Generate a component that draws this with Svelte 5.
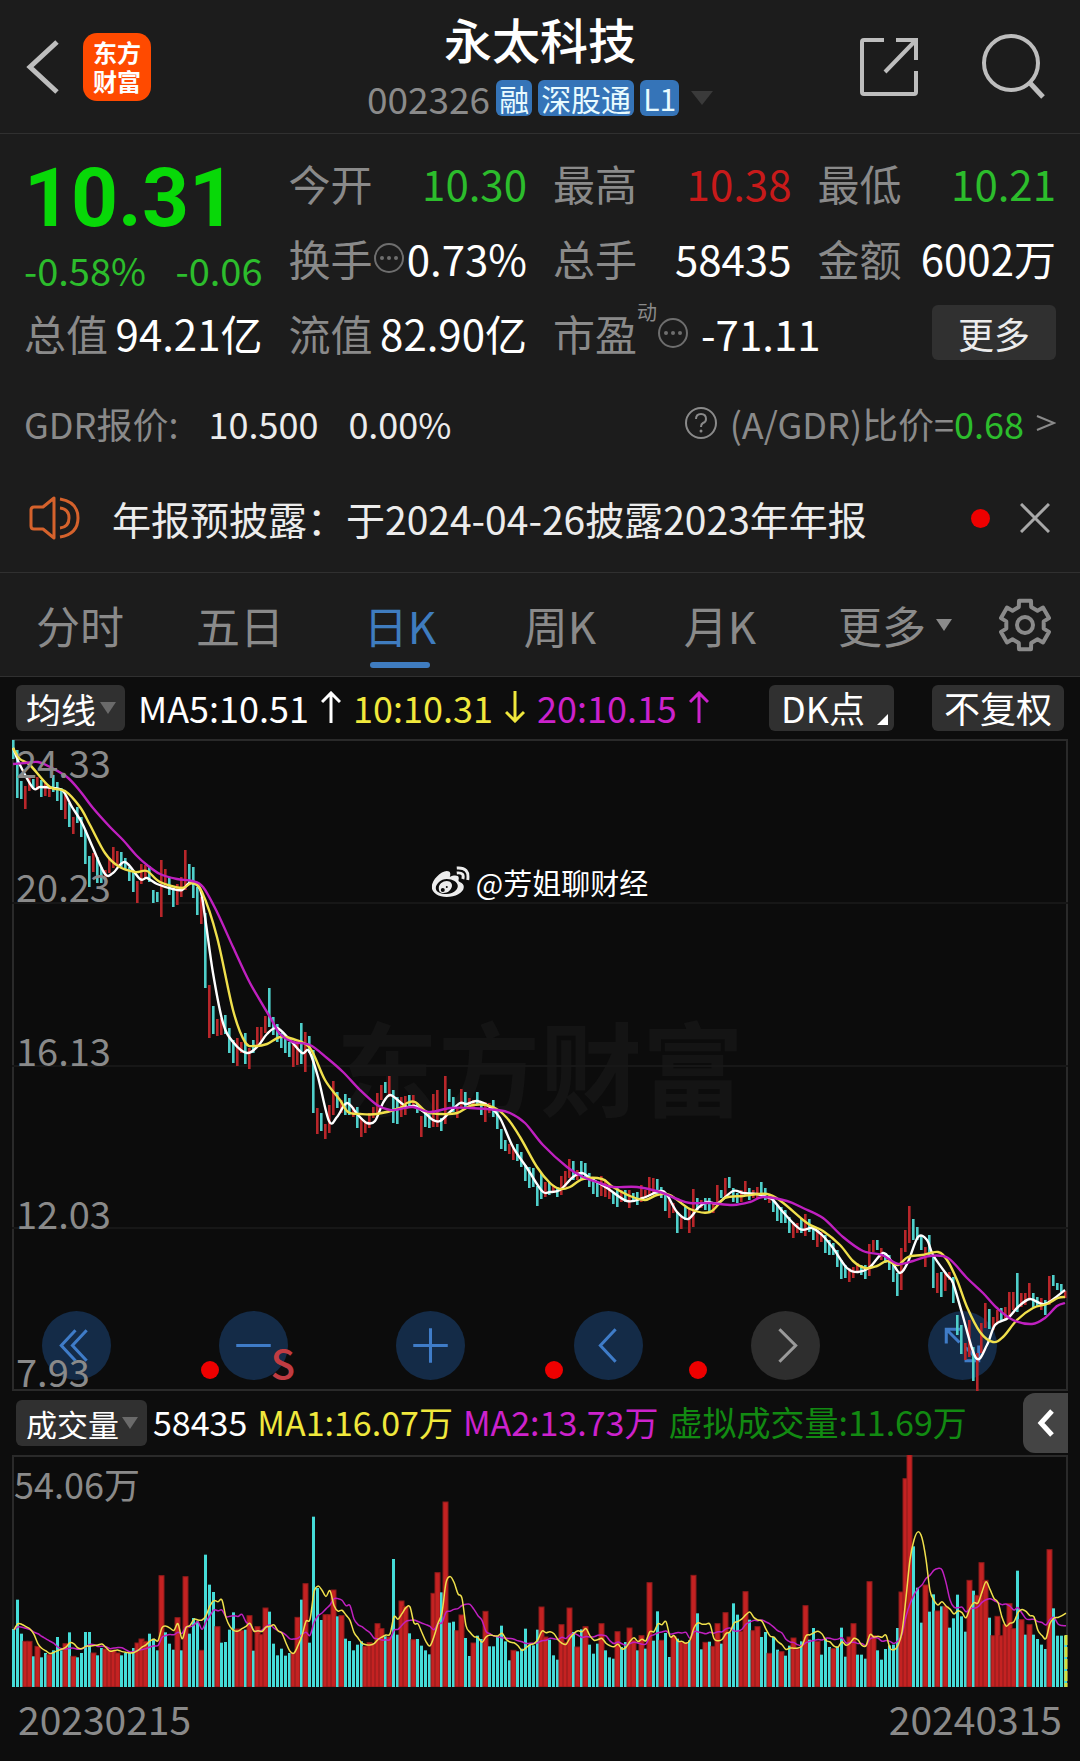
<script lang="ts">
  const MORE_LABEL = '更多';

  type Candle = { top: number; bottom: number; side: string };
  type Bar = { height: number; side: string };

  // high/low of every session in chart units, u = up day, d = down day
  const candleData = `
    1,20d 11,59d 42,60d 47,70u 36,52u 40,50d 38,51u 41,58d 44,57u 48,58u 36,53d 43,62d
    49,71d 56,80u 64,88d 78,95u 68,84d 78,98d 91,125d 117,148d 114,133u 118,144d 128,144d 131,139u
    119,134u 108,129u 112,126u 113,128d 119,131d 128,142d 133,153d 142,164u 125,145u 126,140u 127,143d 151,164d
    153,163d 121,178u 130,148u 139,156d 151,168d 145,166u 138,158u 111,151u 125,144d 128,159d 148,176d 158,185u
    174,249d 246,299u 267,295d 280,297u 279,296u 276,295d 289,314d 301,324d 299,327u 303,314u 294,325d 309,330u
    301,314d 288,306u 288,303u 277,294u 249,288d 278,296d 285,303d 294,309d 298,314d 303,318d 306,328u 301,326u
    284,325d 293,333u 297,314d 311,374d 369,395u 374,392d 385,400u 366,394u 342,376u 353,369d 361,374u 355,376d
    359,376d 368,378u 368,389d 379,398u 383,394u 374,389u 368,379u 354,374u 346,361u 343,354d 337,358u 351,384d
    358,385d 358,378u 357,376u 356,368d 356,369u 364,374d 377,398u 374,388d 374,389d 355,388u 351,388u 379,392d
    337,385u 350,363d 358,373d 368,379u 350,368u 353,368d 359,368u 361,369u 353,366d 363,376d 363,383u 364,374u
    361,378d 371,390d 390,410d 401,412d 405,415u 409,421u 405,422d 413,428d 426,442d 428,449d 429,448d 447,467d
    434,460d 443,458u 443,456d 446,454u 448,458d 437,456u 432,448u 420,439u 422,441d 431,441u 422,441d 424,441d
    434,448d 439,455d 444,458d 437,457u 441,458u 446,460u 453,465d 449,468d 451,463u 451,463d 451,469u 454,463d
    453,466d 446,463u 451,459u 438,456u 439,454u 440,456d 448,459d 455,472d 461,479u 464,474u 473,494d 478,490u
    468,481d 469,494u 450,488u 459,471d 461,469u 459,471d 459,473d 463,474u 446,463u 451,459d 439,458u 438,449d
    449,463d 454,464d 451,463u 442,456u 449,461d 451,459u 448,459u 443,456d 449,461d 456,464u 459,473d 466,482d
    468,484d 471,484d 478,494d 483,499u 484,494u 479,494d 475,497u 480,493d 488,501d 491,508u 493,503u 496,514d
    501,516d 504,516d 511,528d 521,540d 526,539d 529,543u 528,539u 524,534u 526,536d 526,540d 505,537u 501,513u
    501,511d 509,521u 514,524d 516,531d 524,543d 534,557d 509,551u 491,513u 467,504u 480,501d 488,501d 496,511d
    508,528u 496,518d 516,549d 534,554u 533,558d 533,552u 533,541u 538,564d 576,596d 586,615d 604,621u 581,618u
    608,642d 614,652u 584,614u 564,589u 570,590d 578,591u 571,584u 569,581d 568,581u 553,578u 553,571u 534,573d
    554,568u 554,566u 544,561u 554,568d 558,568d 559,571u 561,576d 537,566u 536,547d 544,551d 545,553d 552,559u`;

  const volumeData = `
    d174 d262 d160 u137 u137 d92 u122 d89 d102 u97 d110 d150 d110 u130 d164 u92 d89 d102 d165 d165 u102 d95
    d117 u114 u110 u110 u102 d95 d102 d102 d117 u132 u144 u137 d160 d145 d110 u334 d164 d130 d112 u208 d110 u331
    d160 d207 d197 u110 d397 d307 d285 u181 d133 d135 d172 d224 u174 u169 d172 u214 d109 u181 u157 u237 d226 d130
    d95 d115 d94 d102 u102 u209 d262 u310 d133 d511 d297 d201 u217 u217 u291 d212 u214 d145 d138 d110 d127 d137
    u122 u133 u130 u190 u175 d152 u150 d384 d157 u258 u242 d161 u142 d144 d124 d110 d98 u281 u343 d284 u555 d193
    d196 u169 u216 d147 d93 u132 d154 d144 u227 d122 d122 d152 d184 d137 d80 u110 d107 d115 d175 d127 d125 d172
    u240 u150 d142 d95 d82 u187 u134 u237 d165 u120 d173 u181 d127 d100 d130 u190 d110 d89 d85 u166 d120 d135
    u177 u140 d110 u154 d115 u313 d139 d227 u140 d162 d90 u152 d145 u135 u133 d140 u335 d221 d113 u134 d136 u122
    u190 d130 u223 d164 d251 d217 u167 u286 d202 u169 u181 d150 d165 u101 d150 d112 u106 d94 d124 u147 u114 d137
    u244 d142 d177 u137 d97 d145 d120 u115 d122 d178 d91 u150 u190 d97 d97 d85 u316 u154 d110 d82 d114 d125
    d127 d177 u285 u625 u697 d422 d298 d193 u306 d226 d278 u228 d242 u242 d178 d206 d277 d212 d166 u320 d289 u275
    u373 u320 d208 u154 u212 u154 u187 u250 u175 d349 u202 d157 u187 d157 d144 d127 d114 u412 d236 d154 d154 d154`;

  const ma5 = `1,9 8,26 21,49 28,48 41,49 51,52 60,68 70,84 81,109 93,135 101,134 113,123 128,140 135,139 145,145
    161,150 170,151 178,144 188,150 193,178 201,234 211,284 221,303 235,314 246,307 255,295 265,289 278,301 290,314
    297,312 306,338 317,382 325,378 335,364 346,376 355,384 363,382 371,364 378,356 388,363 395,368 403,367 413,374
    421,381 428,382 438,373 448,364 455,365 465,362 478,368 488,379 501,408 515,429 530,452 538,453 548,451 561,438
    570,434 578,439 595,449 615,462 631,459 648,452 655,456 665,473 676,480 686,469 695,463 706,464 721,452 731,454
    745,455 754,458 761,461 771,473 788,490 800,489 810,496 821,509 835,529 846,533 858,528 871,514 880,523 888,534
    896,523 906,498 915,501 921,516 935,536 941,544 950,574 964,619 975,606 983,586 996,579 1006,568 1018,560
    1033,565 1053,551`;
  const ma10 = `1,9 8,20 18,26 38,48 53,52 68,68 78,86 93,114 106,127 123,133 135,132 148,143 170,149 180,144 190,153
    205,198 221,271 233,303 243,307 255,305 268,298 281,300 298,309 313,341 328,361 336,373 348,375 365,375 388,369
    395,364 403,363 415,373 428,375 445,374 461,366 481,368 495,379 508,398 525,428 538,444 548,450 558,448 571,440
    590,440 601,448 618,457 633,461 645,456 658,456 678,470 698,473 713,459 731,457 755,455 770,463 795,484 811,492
    828,506 841,522 853,529 865,527 875,522 886,526 896,518 910,516 926,513 935,521 945,541 955,568 968,593 981,603
    991,598 1005,581 1021,569 1035,565 1046,559 1053,558`;
  const ma20 = `1,25 13,24 26,23 38,28 55,38 68,52 81,69 98,88 111,101 125,117 135,126 148,135 165,140 180,142
    191,148 205,173 221,208 238,244 258,278 268,295 281,303 298,306 315,319 331,333 348,351 365,366 378,371 388,370
    401,368 418,373 438,369 458,369 485,371 498,374 513,384 531,406 555,428 571,438 588,444 601,448 625,448 648,453
    665,460 678,464 698,464 721,466 738,463 751,458 775,462 791,469 811,479 831,498 851,512 870,516 886,525 901,522
    918,517 936,519 955,539 971,554 985,569 1001,581 1020,585 1033,579 1045,567 1053,564`;

  const candles: Candle[] = candleData.trim().split(/\s+/).map((c) => {
    const [top, bottom] = c.slice(0, -1).split(',').map(Number);
    return { top, bottom, side: c.endsWith('u') ? 'up' : 'down' };
  });

  const volumes: Bar[] = volumeData.trim().split(/\s+/).map((v) => ({
    height: Number(v.slice(1)) / 3,
    side: v[0] === 'u' ? 'up' : 'down',
  }));

  function parsePoints(text: string): number[][] {
    return text.trim().split(/\s+/).map((p) => p.split(',').map(Number));
  }

  function smooth(points: number[][]): string {
    let d = `M${points[0]}`;
    for (let i = 0; i < points.length - 1; i++) {
      const p0 = points[i - 1] ?? points[i];
      const p1 = points[i];
      const p2 = points[i + 1];
      const p3 = points[i + 2] ?? p2;
      d += `C${p1[0] + (p2[0] - p0[0]) / 6},${p1[1] + (p2[1] - p0[1]) / 6}`;
      d += ` ${p2[0] - (p3[0] - p1[0]) / 6},${p2[1] - (p3[1] - p1[1]) / 6} ${p2}`;
    }
    return d;
  }

  function volumeAverage(days: number): string {
    return smooth(volumes.map((_, i) => {
      let sum = 0;
      for (let k = i - days + 1; k <= i; k++) sum += k < 0 ? 57 : volumes[k].height;
      return [i * 4 + 2, 232 - sum / days];
    }));
  }

  function gearPath(): string {
    const pts: string[] = [];
    for (let t = 0; t < 6; t++) {
      for (const [offset, r] of [[-19, 19], [-14, 25], [14, 25], [19, 19]]) {
        const a = ((t * 60 - 90 + offset) * Math.PI) / 180;
        pts.push(`${(27 + r * Math.cos(a)).toFixed(1)},${(27 + r * Math.sin(a)).toFixed(1)}`);
      }
    }
    return `M${pts.join('L')}Z`;
  }

  const periods = ['分时', '五日', '日K', '周K', '月K'];
  let active = $state('日K');

  const gridLines = [164, 327, 489];
  const priceLabels = [
    { text: '24.33', y: 23 },
    { text: '20.23', y: 147 },
    { text: '16.13', y: 311 },
    { text: '12.03', y: 474 },
    { text: '7.93', y: 632 },
  ];
  const markers = [198, 542, 686];

  const tools = [
    { label: '最早', d: 'M33 19 19 34l14 15M44 19 30 34l14 15' },
    { label: '缩小', d: 'M17 34h34' },
    { label: '放大', d: 'M17 34h34M34 17v34' },
    { label: '向左', d: 'M41 18 26 34l15 16' },
    { label: '向右', d: 'M28 18 44 34 28 50', muted: true },
    { label: '全屏', d: 'M18 32V18h14M18 18l13 13M50 34v15H36M50 49 37 36' },
  ];
</script>

{#snippet arrow(down: boolean)}
  <svg class="arrow" viewBox="0 0 20 32" aria-hidden="true">
    <path d={down ? 'M10 0v30M1 21l9 9 9-9' : 'M10 32V2M1 11l9-9 9 9'} />
  </svg>
{/snippet}

{#snippet info()}
  <svg class="info" viewBox="0 0 32 32" aria-hidden="true">
    <circle cx="16" cy="16" r="14" fill="none" stroke="currentColor" stroke-width="2" />
    <circle cx="9" cy="16" r="2" fill="currentColor" />
    <circle cx="16" cy="16" r="2" fill="currentColor" />
    <circle cx="23" cy="16" r="2" fill="currentColor" />
  </svg>
{/snippet}

<div class="app">
  <div class="top">
    <header>
      <div class="side">
        <button class="icon-btn" aria-label="返回">
          <svg width="34" height="56" viewBox="0 0 34 56"><path d="M31 3 4 28l27 25" stroke="#bdbdbd" stroke-width="5" /></svg>
        </button>
        <div class="logo"><span>东方</span><span>财富</span></div>
      </div>
      <div class="title">
        <h1>永太科技</h1>
        <div class="code">
          <span>002326</span>
          <span class="badge">融</span>
          <span class="badge">深股通</span>
          <span class="badge">L1</span>
          <span class="caret dark"></span>
        </div>
      </div>
      <div class="side end">
        <button class="icon-btn" aria-label="分享">
          <svg width="60" height="60" viewBox="0 0 60 60">
            <path d="M25 3H5q-2 0-2 2v50q0 2 2 2h50q2 0 2-2V34M37 3h20v20M57 3 26 35" stroke="#bdbdbd" stroke-width="4" />
          </svg>
        </button>
        <button class="icon-btn" aria-label="搜索">
          <svg width="66" height="68" viewBox="0 0 66 68">
            <circle cx="30" cy="30" r="27" fill="none" stroke="#bdbdbd" stroke-width="4" />
            <path d="M49 50 62 64" stroke="#bdbdbd" stroke-width="5" />
          </svg>
        </button>
      </div>
    </header>

    <section class="quote">
      <div class="last">
        <strong>10.31</strong>
        <div class="change"><span>-0.58%</span><span>-0.06</span></div>
      </div>
      <div class="cell"><span class="name">今开</span><span class="green">10.30</span></div>
      <div class="cell"><span class="name">最高</span><span class="red">10.38</span></div>
      <div class="cell"><span class="name">最低</span><span class="green">10.21</span></div>
      <div class="cell"><span class="name">换手{@render info()}</span><span>0.73%</span></div>
      <div class="cell"><span class="name">总手</span><span>58435</span></div>
      <div class="cell"><span class="name">金额</span><span>6002万</span></div>
      <div class="cell"><span class="name">总值</span><span>94.21亿</span></div>
      <div class="cell"><span class="name">流值</span><span>82.90亿</span></div>
      <div class="cell wide">
        <span class="pe"><span class="name">市盈<sup>动</sup>{@render info()}</span><span>-71.11</span></span>
        <button class="more">{MORE_LABEL}</button>
      </div>
    </section>

    <section class="gdr">
      <span class="name">GDR报价:</span>
      <span class="gdr-price">10.500</span>
      <span>0.00%</span>
      <a class="ratio" href="#gdr">
        <svg width="34" height="34" viewBox="0 0 34 34" aria-hidden="true">
          <circle cx="17" cy="17" r="15" fill="none" stroke="#8a8a8a" stroke-width="2" />
          <path d="M12 13q0-5 5-5t5 5q0 3-3 4-2 1-2 4" stroke="#8a8a8a" stroke-width="2" />
          <circle cx="17" cy="25" r="1.5" fill="#8a8a8a" />
        </svg>
        <span>(A/GDR)比价=<em>0.68</em></span>
        <svg width="20" height="18" viewBox="0 0 20 18" aria-hidden="true"><path d="M1 2l17 7-17 7" stroke="#8a8a8a" stroke-width="2" /></svg>
      </a>
    </section>

    <section class="notice">
      <svg width="52" height="46" viewBox="0 0 52 46" aria-hidden="true">
        <path d="M26 3v40L15 34H6q-3 0-3-3V15q0-3 3-3h9ZM32 4q18 3 18 19T32 42M32 13q9 1 9 10t-9 10" stroke="#d5622c" stroke-width="3" stroke-linejoin="round" />
      </svg>
      <span class="notice-text">年报预披露：于2024-04-26披露2023年年报</span>
      <span class="dot"></span>
      <button class="icon-btn" aria-label="关闭">
        <svg width="30" height="30" viewBox="0 0 30 30"><path d="M1 1l28 28M29 1 1 29" stroke="#a8a8a8" stroke-width="3" /></svg>
      </button>
    </section>

    <nav class="tabs">
      {#each periods as period}
        <button class="tab" class:active={active === period} onclick={() => (active = period)}>{period}</button>
      {/each}
      <button class="tab">{MORE_LABEL}<span class="caret small"></span></button>
      <button class="icon-btn" aria-label="设置">
        <svg width="54" height="54" viewBox="0 0 54 54">
          <path d={gearPath()} stroke="#8a8a8a" stroke-width="4" stroke-linejoin="round" />
          <circle cx="27" cy="27" r="8" fill="none" stroke="#8a8a8a" stroke-width="4" />
        </svg>
      </button>
    </nav>
  </div>

  <div class="bar">
    <label class="pick">
      <select aria-label="主图指标"><option>均线</option></select>
      <span class="caret grey"></span>
    </label>
    <div class="legend">
      <span>MA5:10.51{@render arrow(false)}</span>
      <span class="yellow">10:10.31{@render arrow(true)}</span>
      <span class="magenta">20:10.15{@render arrow(false)}</span>
    </div>
    <button class="chip dk">DK点</button>
    <button class="chip">不复权</button>
  </div>

  <div class="chart">
    <div class="watermark" aria-hidden="true">东方财富</div>
    {#each priceLabels as label}
      <span class="price-label" style="top: {(label.y / 652) * 100}%">{label.text}</span>
    {/each}
    <div class="tools">
      {#each tools as tool}
        <button class="tool" class:muted={tool.muted} aria-label={tool.label}>
          <svg viewBox="0 0 68 68"><path d={tool.d} /></svg>
        </button>
      {/each}
    </div>
    <svg class="plot" viewBox="0 0 1056 652">
      <path class="frame" d="M0 1H1056M0 651H1056M1 0V652M1055 0V652" />
      {#each gridLines as y}
        <line class="grid" x1="0" x2="1056" y1={y} y2={y} />
      {/each}
      {#each candles as c, i}
        <rect class={c.side} x={i * 4} y={c.top} width="2.6" height={c.bottom - c.top} />
      {/each}
      <path class="line" stroke="#ffffff" d={smooth(parsePoints(ma5))} />
      <path class="line" stroke="#f0e04c" d={smooth(parsePoints(ma10))} />
      <path class="line" stroke="#c020c0" d={smooth(parsePoints(ma20))} />
      {#each markers as x}
        <circle cx={x} cy="631" r="9" fill="#ee0000" />
      {/each}
      <text class="sell" x="271" y="640">S</text>
    </svg>
    <div class="credit">
      <svg width="38" height="32" viewBox="0 0 38 32" aria-hidden="true">
        <path fill-rule="evenodd" d="M0 21C0 14 9 5 15 5c4 0 4 3 3 6 4-2 9-2 9 1 0 2-1 3 1 4 3 1 4 3 4 5 0 6-9 10-17 10C7 31 0 27 0 21ZM4 22c0 4 5 6 11 6s11-4 11-8-5-7-11-7-11 5-11 9Z" />
        <path fill-rule="evenodd" d="M7 22c0-4 4-7 8-7s6 3 5 6-4 6-8 6-5-2-5-5Zm2 2a2 2 0 1 0 4 0 2 2 0 1 0-4 0Zm5-3a1 1 0 1 0 2 0 1 1 0 1 0-2 0Z" />
        <path d="M25 2q13-1 11 12M25 7q8-1 6 6" stroke="#ececec" stroke-width="3" />
      </svg>
      <span>@芳姐聊财经</span>
    </div>
  </div>

  <div class="bar volume-bar">
    <label class="pick">
      <select aria-label="副图指标"><option>成交量</option></select>
      <span class="caret grey"></span>
    </label>
    <div class="legend">
      <span>58435</span>
      <span class="yellow">MA1:16.07万</span>
      <span class="magenta">MA2:13.73万</span>
      <span class="virtual">虚拟成交量:11.69万</span>
    </div>
    <button class="drawer" aria-label="展开">
      <svg width="18" height="30" viewBox="0 0 18 30"><path d="M15 3 4 15l11 12" stroke="#fff" stroke-width="5" /></svg>
    </button>
  </div>

  <div class="chart">
    <span class="price-label max-volume">54.06万</span>
    <svg class="plot" viewBox="0 0 1056 232">
      <path class="frame" d="M0 1H1056M1 0V232M1055 0V232" />
      {#each volumes as v, i}
        {#if v.side === 'up'}
          <rect class="vol-up" x={i * 4 - 1} y={232 - v.height} width="5" height={v.height} />
        {:else}
          <rect class="vol-down" x={i * 4} y={232 - v.height} width="3" height={v.height} />
        {/if}
      {/each}
      <path class="virtual-bar" d="M1054 180V232" />
      <path class="line thin" stroke="#c020c0" d={volumeAverage(10)} />
      <path class="line thin" stroke="#f0e04c" d={volumeAverage(5)} />
    </svg>
  </div>
  <div class="dates"><span>20230215</span><span>20240315</span></div>
</div>

<style>
  :global(body) {
    margin: 0;
    background: #0d0d0d;
  }
  .app {
    background: #0d0d0d;
    color: #fff;
    font-family: 'Noto Sans CJK SC', 'Noto Sans', sans-serif;
    line-height: 1;
    white-space: nowrap;
  }
  button, select {
    font: inherit;
    color: inherit;
    border: 0;
    padding: 0;
    background: none;
    cursor: pointer;
  }
  svg {
    display: block;
    flex-shrink: 0;
  }
  svg path { fill: none; }
  .credit svg path[fill-rule] { fill: #ececec; }
  .icon-btn {
    display: flex;
    align-items: center;
    justify-content: center;
  }
  .top { background: #1c1c1c; }

  header {
    display: grid;
    grid-template-columns: 1fr auto 1fr;
    align-items: center;
    height: 133px;
    padding: 0 26px;
    border-bottom: 1px solid #303030;
  }
  .side {
    display: flex;
    align-items: center;
    gap: 23px;
  }
  .side.end {
    justify-content: flex-end;
    gap: 62px;
    padding-right: 7px;
  }
  .logo {
    display: flex;
    flex-direction: column;
    align-items: center;
    justify-content: center;
    gap: 5px;
    width: 68px;
    height: 68px;
    border-radius: 14px;
    background: #ff4a00;
    font-size: 24px;
    font-weight: 700;
  }
  .title {
    display: flex;
    flex-direction: column;
    align-items: center;
    gap: 18px;
    padding-bottom: 3px;
  }
  h1 {
    margin: 0;
    font-size: 48px;
    font-weight: 500;
  }
  .code {
    display: flex;
    align-items: center;
    gap: 6px;
    font-size: 37px;
    color: #8a8a8a;
  }
  .badge {
    padding: 3px;
    border-radius: 6px;
    background: #3574b8;
    color: #e8fbff;
    font-size: 30px;
  }
  .caret {
    display: inline-block;
    border: 8px solid transparent;
    border-top: 12px solid #6a6a6a;
    border-bottom: 0;
  }
  .caret.dark {
    margin-left: 6px;
    border-width: 14px 11px 0;
    border-top-color: #3a3a3a;
  }
  .caret.small { border-top-color: #8a8a8a; }

  .quote {
    display: grid;
    grid-template-columns: repeat(4, 1fr);
    grid-auto-rows: 75px;
    column-gap: 26px;
    padding: 11px 24px 0;
    font-size: 42px;
  }
  .last {
    grid-row: span 2;
    display: flex;
    flex-direction: column;
    justify-content: space-between;
    padding: 12px 0 6px;
    color: #2cbd2c;
  }
  .last strong {
    font-family: Roboto, 'Noto Sans CJK SC', sans-serif;
    font-size: 82px;
    font-weight: 700;
    color: #08d808;
  }
  .change {
    display: flex;
    justify-content: space-between;
    font-size: 38px;
  }
  .cell {
    display: flex;
    align-items: center;
    justify-content: space-between;
  }
  .cell.wide { grid-column: span 2; }
  .name {
    display: flex;
    align-items: center;
    color: #8a8a8a;
  }
  .pe {
    display: flex;
    align-items: center;
    gap: 12px;
  }
  sup {
    align-self: flex-start;
    font-size: 20px;
  }
  .name sup { margin-top: -10px; }
  .info {
    width: 32px;
    color: #6e6e6e;
  }
  .green { color: #2cbd2c; }
  .red { color: #c81a1a; }
  .more {
    width: 124px;
    height: 55px;
    border-radius: 6px;
    background: #303030;
    color: #ececec;
    font-size: 36px;
  }

  .gdr {
    display: flex;
    align-items: center;
    height: 106px;
    padding: 0 24px;
    font-size: 36px;
    color: #ececec;
  }
  .gdr-price { margin: 0 30px; }
  .ratio {
    display: flex;
    align-items: center;
    gap: 12px;
    margin-left: auto;
    color: #8a8a8a;
    text-decoration: none;
  }
  .ratio em {
    font-style: normal;
    color: #2cbd2c;
  }

  .notice {
    display: flex;
    align-items: center;
    height: 84px;
    padding: 0 30px 12px 28px;
    border-bottom: 1px solid #303030;
    font-size: 39px;
    color: #ececec;
  }
  .notice-text {
    flex: 1;
    padding-left: 32px;
  }
  .dot {
    width: 19px;
    height: 19px;
    margin-right: 30px;
    border-radius: 50%;
    background: #ee0000;
  }

  .tabs {
    display: grid;
    grid-template-columns: repeat(5, 16fr) 19fr 7fr;
    height: 103px;
    padding-right: 20px;
    border-bottom: 1px solid #303030;
    font-size: 44px;
    color: #8a8a8a;
  }
  .tab {
    position: relative;
    display: flex;
    align-items: center;
    justify-content: center;
    gap: 10px;
  }
  .tab.active { color: #3f7cbf; }
  .tab.active::after {
    content: '';
    position: absolute;
    bottom: 8px;
    width: 60px;
    height: 6px;
    border-radius: 3px;
    background: #3f7cbf;
  }

  .bar {
    position: relative;
    display: flex;
    align-items: center;
    height: 62px;
    padding: 0 16px;
    font-size: 36px;
  }
  .pick {
    position: relative;
    display: flex;
    align-items: center;
    font-size: 35px;
  }
  .pick select {
    appearance: none;
    height: 46px;
    padding: 0 28px 0 10px;
    border-radius: 6px;
    background: #303030;
  }
  .pick .caret {
    position: absolute;
    right: 9px;
    pointer-events: none;
  }
  .legend {
    display: flex;
    flex: 1;
    align-items: center;
    gap: 12px;
    padding: 0 0 3px 13px;
  }
  .legend span {
    display: flex;
    align-items: center;
    gap: 12px;
  }
  .arrow {
    width: 20px;
    height: 32px;
  }
  .arrow path {
    stroke: currentColor;
    stroke-width: 3;
  }
  .yellow { color: #f0e83c; }
  .magenta { color: #cc22cc; }
  .virtual { color: #128a12; }
  .chip {
    position: relative;
    height: 46px;
    margin-left: 38px;
    padding: 0 12px 3px;
    border-radius: 6px;
    background: #303030;
  }
  .chip.dk { padding-right: 29px; }
  .chip.dk::after {
    content: '';
    position: absolute;
    right: 6px;
    bottom: 6px;
    border-bottom: 11px solid #fff;
    border-left: 11px solid transparent;
  }
  .volume-bar {
    height: 64px;
    font-size: 34px;
  }
  .volume-bar .pick { font-size: 31px; }
  .volume-bar .legend {
    gap: 10px;
    padding-left: 6px;
  }
  .drawer {
    position: absolute;
    right: 12px;
    display: flex;
    align-items: center;
    justify-content: center;
    width: 45px;
    height: 60px;
    border-radius: 12px 0 0 12px;
    background: #444;
  }

  .chart {
    position: relative;
    margin: 0 12px;
    background: #0c0c0c;
  }
  .plot {
    position: relative;
    width: 100%;
    pointer-events: none;
  }
  .frame {
    stroke: #2a2a2a;
    stroke-width: 2;
  }
  .grid {
    stroke: #171717;
    stroke-width: 2;
  }
  .up { fill: #b8262a; }
  .down { fill: #4fcfca; }
  .line { stroke-width: 2.4; }
  .thin { stroke-width: 1.5; }
  .vol-up {
    fill: #c42222;
    stroke: #8c1a1a;
    stroke-width: 1;
  }
  .vol-down { fill: #45dcd8; }
  .virtual-bar {
    stroke: #d8e03c;
    stroke-width: 3;
    stroke-dasharray: 10 2;
  }
  .sell {
    fill: #c03c42;
    font-size: 40px;
    font-weight: 500;
    text-anchor: middle;
  }
  .price-label {
    position: absolute;
    left: 4px;
    z-index: 1;
    transform: translateY(-50%);
    font-size: 38px;
    color: #8a8a8a;
  }
  .max-volume {
    top: 12%;
    left: 2px;
    font-size: 36px;
  }
  .watermark {
    position: absolute;
    top: 50%;
    left: 50%;
    transform: translate(-50%, -50%);
    font-size: 102px;
    font-weight: 700;
    color: #141414;
  }
  .tools {
    position: absolute;
    right: 71px;
    bottom: 11px;
    left: 30px;
    display: flex;
    justify-content: space-between;
  }
  .tool {
    width: 69px;
    height: 69px;
    border-radius: 50%;
    background: #142b47;
  }
  .tool path {
    stroke: #3f7cc8;
    stroke-width: 3;
  }
  .tool.muted { background: #2e2e2e; }
  .tool.muted path { stroke: #9a9a9a; }
  .credit {
    position: absolute;
    top: 22%;
    left: 50%;
    transform: translate(-50%, -50%);
    display: flex;
    align-items: center;
    gap: 6px;
    font-size: 29px;
  }
  .dates {
    display: flex;
    justify-content: space-between;
    padding: 12px 18px 14px;
    font-size: 39px;
    color: #8a8a8a;
  }
</style>
